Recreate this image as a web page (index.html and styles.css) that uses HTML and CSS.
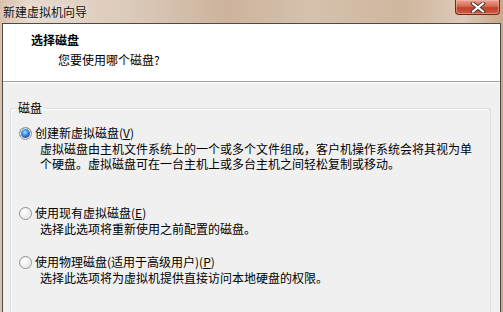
FILE: index.html
```html
<!DOCTYPE html>
<html lang="zh-CN">
<head>
  <meta charset="UTF-8">
  <title>新建虚拟机向导</title>
  <link rel="stylesheet" href="styles.css">
</head>
<body>
  <div class="window">

    <!-- Title bar -->
    <div class="titlebar">
      <span class="title">新建虚拟机向导</span>
      <span class="close">
        <svg width="16" height="11" viewBox="0 0 16 11">
          <path d="M3 1.5 L13 9.5 M13 1.5 L3 9.5" stroke="#4a3a38" stroke-width="4" stroke-linecap="square"/>
          <path d="M3 1.5 L13 9.5 M13 1.5 L3 9.5" stroke="#ffffff" stroke-width="2" stroke-linecap="square"/>
        </svg>
      </span>
    </div>

    <div class="frame">
      <!-- Header -->
      <div class="header">
        <h1>选择磁盘</h1>
        <p>您要使用哪个磁盘?</p>
      </div>

      <!-- Body -->
      <div class="content">
        <fieldset class="group">
          <legend>磁盘</legend>

          <div class="option first">
            <label><span class="radio checked"></span>创建新虚拟磁盘(<u>V</u>)</label>
            <p class="desc"><span>虚拟磁盘由主机文件系统上的一个或多个文件组成，客户机操作系统会将其视为单</span><span>个硬盘。虚拟磁盘可在一台主机上或多台主机之间轻松复制或移动。</span></p>
          </div>

          <div class="option second">
            <label><span class="radio"></span>使用现有虚拟磁盘(<u>E</u>)</label>
            <p class="desc"><span>选择此选项将重新使用之前配置的磁盘。</span></p>
          </div>

          <div class="option third">
            <label><span class="radio"></span>使用物理磁盘(适用于高级用户)(<u>P</u>)</label>
            <p class="desc"><span>选择此选项将为虚拟机提供直接访问本地硬盘的权限。</span></p>
          </div>
        </fieldset>
      </div>
    </div>

  </div>
</body>
</html>
```

FILE: styles.css
```css
:root {
  --font: "Noto Sans CJK SC", "Liberation Sans", sans-serif;
  --dialog-bg: #f0f0f0;
  --frame-border: #4d4a48;
  --group-border: #d5dfe5;
}
* { box-sizing: border-box; margin: 0; padding: 0; }
body { font-family: var(--font); font-size: 12px; color: #000; background: #fff; }

.window {
  width: 503px; height: 312px; overflow: hidden;
  display: flex; flex-direction: column;
  background: linear-gradient(90deg, #d9c0aa 0%, #e6d9cc 6%, #dccbbb 25%, #cdb39c 45%, #d6c1ad 62%, #cfb69e 80%, #dcc9b7 92%, #c9a98c 100%);
}

.titlebar { height: 23px; display: flex; justify-content: space-between; align-items: flex-start; flex-shrink: 0; }
.title { padding: 4px 0 0 3px; line-height: 15px; font-size: 12px; color: #111; text-shadow: 0 0 6px rgba(255,255,255,0.8); }
.close {
  width: 45px; height: 15px; margin-right: 3px;
  display: flex; align-items: center; justify-content: center;
  border: 1px solid #6b2a1e; border-top: none; border-radius: 0 0 4px 4px;
  background: linear-gradient(#e9a596 0%, #d46a55 45%, #c2412a 55%, #cf5c43 100%);
  box-shadow: inset 0 0 0 1px rgba(255,190,170,0.5);
}
.close svg { display: block; }

.frame { flex: 1; margin: 0 2px; border: 1px solid var(--frame-border); border-bottom: none; background: var(--dialog-bg); display: flex; flex-direction: column; }

.header { height: 58px; flex-shrink: 0; background: #fff; border-bottom: 1px solid #a0a0a0; box-shadow: 0 1px 0 #fff; padding: 8px 0 0 28px; }
.header h1 { font-size: 12px; font-weight: bold; line-height: 16px; }
.header p { margin: 4px 0 0 27px; line-height: 16px; }

.content { flex: 1; padding: 18px 9px 0 7px; }

.group { border: 1px solid var(--group-border); border-bottom: none; border-radius: 3px 3px 0 0; padding: 9px 0 0 5px; height: 260px; box-shadow: inset 1px 1px 0 #fff; }
.group legend { padding: 0 2px; line-height: 16px; }

.option { margin-left: 3px; }
.option.second { margin-top: 33px; }
.option.third { margin-top: 17px; }
.option label { display: flex; align-items: center; line-height: 16px; }
.option u { text-underline-offset: 1px; }
.desc { margin: 1px 0 0 21px; }
.desc span { display: block; height: 15px; line-height: 14px; font-size: 12px; }

.radio {
  width: 13px; height: 13px; margin-right: 3px; border-radius: 50%; flex-shrink: 0;
  border: 1px solid #8e8f8f;
  background: radial-gradient(circle at 40% 35%, #ffffff 0%, #f2f2f2 40%, #d4d4d4 100%);
  box-shadow: inset 0 0 0 1px #f4f4f4;
}
.radio.checked {
  background:
    radial-gradient(circle at 45% 40%, #a8dcff 0%, #3a8be0 35%, #1a4e9a 62%, transparent 66%),
    radial-gradient(circle at 40% 35%, #ffffff 0%, #f2f2f2 40%, #d4d4d4 100%);
}
```
